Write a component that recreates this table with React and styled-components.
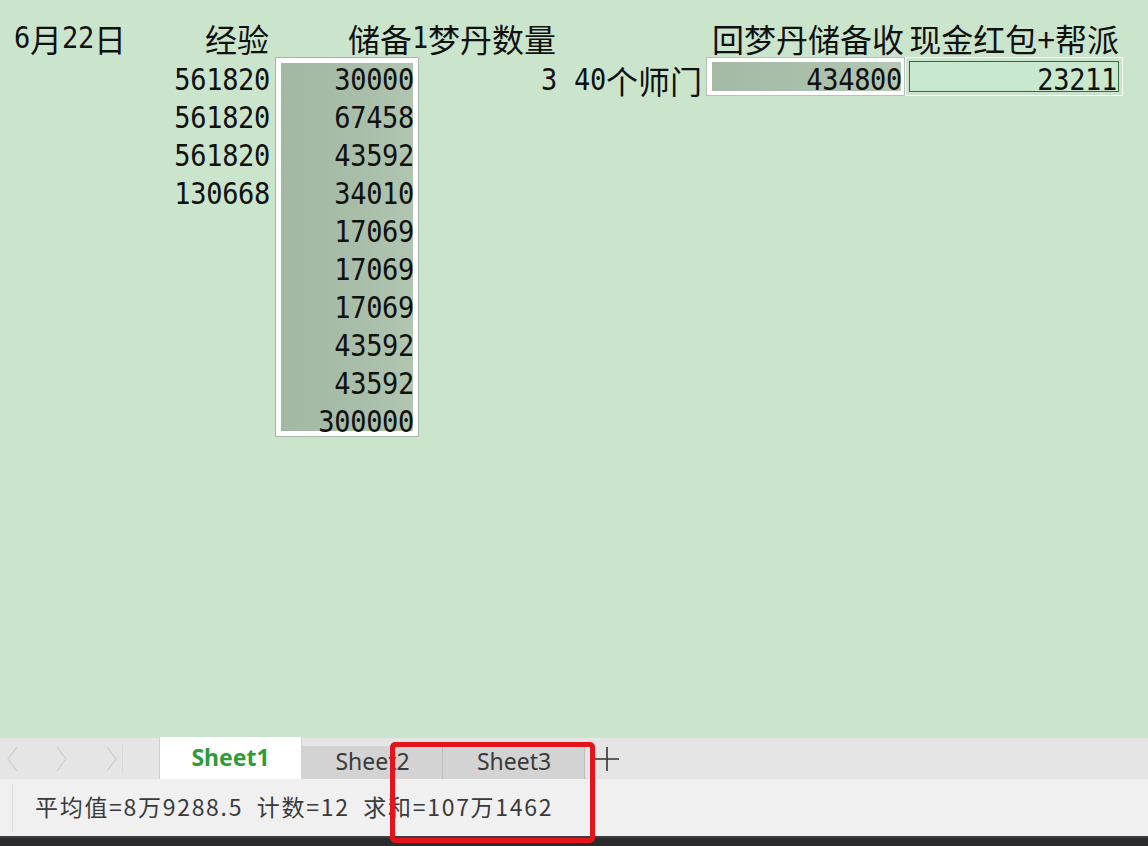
import React from "react";
import styled, { createGlobalStyle } from "styled-components";

const GlobalStyle = createGlobalStyle`
  html, body {
    margin: 0;
    padding: 0;
    background: #cbe5cd;
  }
  * {
    box-sizing: border-box;
  }
`;

const Screen = styled.div`
  position: relative;
  width: 1148px;
  height: 846px;
  display: flex;
  flex-direction: column;
  overflow: hidden;
  font-family: "Noto Sans CJK SC", "Noto Sans", sans-serif;
`;

const Sheet = styled.div`
  flex: 1;
  background: #cbe5cd;
  padding-top: 19px;
  display: grid;
  grid-template-columns: 130px 142px 147px 141px 146px 199px 218px;
  grid-auto-rows: 38px;
  align-content: start;
  color: #111;
`;

const Cell = styled.div`
  grid-column: ${props => props.col};
  grid-row: ${props => props.row};
  position: relative;
  z-index: 2;
  display: flex;
  justify-content: ${props => (props.left ? "flex-start" : "flex-end")};
  white-space: nowrap;
  font-size: 32px;
  line-height: 38px;
  padding-left: ${props => props.padLeft || 0}px;
  padding-right: ${props => props.padRight || 0}px;
  padding-top: ${props => (props.head ? 0 : 4)}px;
`;

const Digits = styled.span`
  font-family: "DejaVu Sans Mono", "Liberation Mono", monospace;
  font-size: 27px;
  letter-spacing: -0.3px;
  display: inline-block;
  transform: scaleY(1.1);
`;

const SelectionFrame = styled.div`
  grid-column: 3;
  grid-row: 2 / span 10;
  margin-left: 3px;
  border: 1px solid #a7b4a7;
  background: #ffffff;
  padding: 5px;
  z-index: 1;
`;

const SelectionFill = styled.div`
  height: 100%;
  background: linear-gradient(90deg, #a3b8a3 0%, #a9bea9 60%, #b0c6b0 100%);
`;

const BoxedCell = styled.div`
  grid-column: ${props => props.col};
  grid-row: 2;
  height: 39px;
  z-index: 1;
  border: 1px solid ${props => (props.green ? "#ffffff" : "#b6c2b6")};
  background: ${props => (props.green ? "#cbe5cd" : "#ffffff")};
  padding: ${props => (props.green ? "3px" : "4px 3px 4px 5px")};
`;

const BoxFill = styled.div`
  height: 100%;
  border: ${props => (props.green ? "1.5px solid #2f6f3e" : "none")};
  background: ${props =>
    props.green
      ? "#c8e9cd"
      : "linear-gradient(90deg, #a5baa5 0%, #adc2ad 70%, #b4cab4 100%)"};
`;

const TabBar = styled.div`
  height: 41px;
  background: #e6e5e6;
  display: flex;
  align-items: flex-end;
`;

const NavArea = styled.div`
  width: 159px;
  height: 100%;
  display: flex;
  align-items: center;
  padding-left: 6px;
  gap: 38px;
`;

const NavSep = styled.div`
  width: 1px;
  height: 28px;
  background: #d9d8d9;
  margin-left: -34px;
`;

const Tab = styled.div`
  width: ${props => props.width}px;
  height: ${props => (props.active ? 42 : 33)}px;
  display: flex;
  align-items: center;
  justify-content: center;
  padding-bottom: ${props => (props.active ? 2 : 4)}px;
  font-family: "Noto Sans", "Open Sans", sans-serif;
  font-size: 23px;
  font-weight: ${props => (props.active ? 700 : 400)};
  color: ${props => (props.active ? "#2f9b39" : "#3a3a3a")};
  background: ${props => (props.active ? "#ffffff" : "#d4d3d4")};
  border-left: 1px solid ${props => (props.active ? "#d0d0d0" : "transparent")};
  border-right: 1px solid ${props => (props.active ? "#d0d0d0" : "#bdbdbd")};
`;

const AddTab = styled.div`
  width: 44px;
  height: 41px;
  display: flex;
  align-items: center;
  justify-content: center;
`;

const StatusBar = styled.div`
  height: 57px;
  background: #f1f0f1;
  display: flex;
  align-items: center;
  padding-left: 12px;
`;

const StatusSep = styled.div`
  width: 1px;
  height: 48px;
  background: #dedede;
`;

const StatusText = styled.div`
  margin-left: 22px;
  margin-top: -3px;
  font-size: 23px;
  letter-spacing: 1.7px;
  color: #3a3a3a;
  white-space: pre;
  font-family: "Noto Sans CJK SC", "Noto Sans", sans-serif;
  font-weight: 400;
`;

const BottomStrip = styled.div`
  height: 10px;
  background: #2b2b2d;
  border-top: 2px solid #3e3e40;
`;

const Highlight = styled.div`
  position: absolute;
  left: 390px;
  top: 742px;
  width: 205px;
  height: 101px;
  border: 5px solid #e3141b;
  border-radius: 5px;
  z-index: 5;
`;

function Mixed({ text }) {
  return text
    .split(/([0-9.]+)/)
    .filter(Boolean)
    .map((part, i) =>
      /[0-9]/.test(part) ? <Digits key={i}>{part}</Digits> : <span key={i}>{part}</span>
    );
}

const Chevron = ({ left }) => (
  <svg width="12" height="28" viewBox="0 0 12 28">
    <polyline
      points={left ? "11,2 2,14 11,26" : "1,2 10,14 1,26"}
      fill="none"
      stroke="#d3d2d3"
      strokeWidth="1.4"
    />
  </svg>
);

const experience = ["561820", "561820", "561820", "130668"];
const reserve = [
  "30000",
  "67458",
  "43592",
  "34010",
  "17069",
  "17069",
  "17069",
  "43592",
  "43592",
  "300000"
];

export default function App() {
  return (
    <Screen>
      <GlobalStyle />
      <Sheet>
        <Cell col={1} row={1} head left padLeft={14}>
          <Mixed text="6月22日" />
        </Cell>
        <Cell col={2} row={1} head padRight={3}>
          经验
        </Cell>
        <Cell col={4} row={1} head padRight={4}>
          <Mixed text="储备1梦丹数量" />
        </Cell>
        <Cell col={6} row={1} head padRight={1}>
          回梦丹储备收
        </Cell>
        <Cell col={7} row={1} head padRight={4}>
          现金红包+帮派
        </Cell>

        {experience.map((v, i) => (
          <Cell key={"e" + i} col={2} row={i + 2} padRight={2}>
            <Digits>{v}</Digits>
          </Cell>
        ))}

        <SelectionFrame>
          <SelectionFill />
        </SelectionFrame>
        {reserve.map((v, i) => (
          <Cell key={"r" + i} col={3} row={i + 2} padRight={5}>
            <Digits>{v}</Digits>
          </Cell>
        ))}

        <Cell col={4} row={2} padRight={3}>
          <Digits>3</Digits>
        </Cell>
        <Cell col={5} row={2} left padLeft={14}>
          <Mixed text="40个师门" />
        </Cell>
        <BoxedCell col={6}>
          <BoxFill />
        </BoxedCell>
        <Cell col={6} row={2} padRight={3}>
          <Digits>434800</Digits>
        </Cell>
        <BoxedCell col={7} green>
          <BoxFill green />
        </BoxedCell>
        <Cell col={7} row={2} padRight={6}>
          <Digits>23211</Digits>
        </Cell>
      </Sheet>

      <TabBar>
        <NavArea>
          <Chevron left />
          <Chevron />
          <Chevron />
          <NavSep />
        </NavArea>
        <Tab width={143} active>
          Sheet1
        </Tab>
        <Tab width={141}>Sheet2</Tab>
        <Tab width={142}>Sheet3</Tab>
        <AddTab>
          <svg width="26" height="26" viewBox="0 0 26 26">
            <path d="M13 1 V25 M1 13 H25" stroke="#333" strokeWidth="1.6" fill="none" />
          </svg>
        </AddTab>
      </TabBar>

      <StatusBar>
        <StatusSep />
        <StatusText>{"平均值=8万9288.5  计数=12  求和=107万1462"}</StatusText>
      </StatusBar>
      <BottomStrip />
      <Highlight />
    </Screen>
  );
}
